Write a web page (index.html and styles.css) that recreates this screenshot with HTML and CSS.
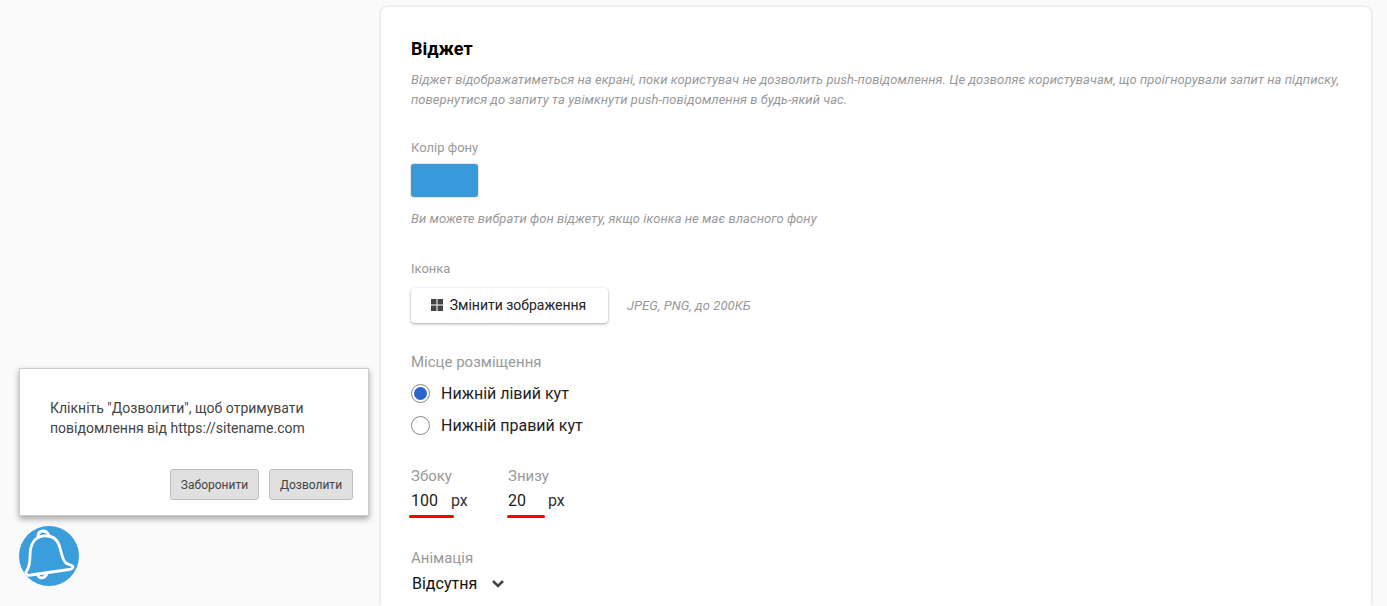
FILE: index.html
```html
<!DOCTYPE html>
<html lang="uk">
<head>
  <meta charset="UTF-8">
  <title>Віджет</title>
  <link rel="stylesheet" href="styles.css">
</head>
<body>

<div class="preview">
  <div class="popup">
    <p class="popup-text">Клікніть "Дозволити", щоб отримувати повідомлення від https://sitename.com</p>
    <div class="popup-actions">
      <button class="popup-btn btn-deny">Заборонити</button>
      <button class="popup-btn btn-allow">Дозволити</button>
    </div>
  </div>
  <div class="bell">
    <svg width="60" height="60" viewBox="0 0 60 60" fill="none" stroke="#fff" stroke-width="2.8" stroke-linecap="round" stroke-linejoin="round">
      <path d="M7 46 C10 42 11 38 11 30 C11 18 16 11 24 10 C33 9 39 13 41 22 C43 30 44 35 47 37 C50 39 54 39 54 41 C54 43 52 43 50 43.500 L12 49 C8 50 6 48 7 46 Z"/>
      <path d="M19 11 C19 6 22 5 24 5 C27 5 29 7 30 10"/>
      <path d="M19 49 C20 53 26 53 28 47.500"/>
    </svg>
  </div>
</div>

<div class="card">
  <h2 class="title">Віджет</h2>
  <p class="hint hint-top">Віджет відображатиметься на екрані, поки користувач не дозволить push-повідомлення. Це дозволяє користувачам, що проігнорували запит на підписку, повернутися до запиту та увімкнути push-повідомлення в будь-який час.</p>

  <div class="label label-color">Колір фону</div>
  <div class="swatch"></div>
  <p class="hint hint-color">Ви можете вибрати фон віджету, якщо іконка не має власного фону</p>

  <div class="label label-icon">Іконка</div>
  <div class="upload-row">
    <button class="upload-btn">
      <svg width="12" height="12" viewBox="0 0 12 12" fill="#444">
        <rect width="5.500" height="5.500"/>
        <rect x="6.500" width="5.500" height="5.500"/>
        <rect y="6.500" width="5.500" height="5.500"/>
        <rect x="6.500" y="6.500" width="5.500" height="5.500"/>
      </svg>
      <span class="upload-text">Змінити зображення</span>
    </button>
    <span class="hint">JPEG, PNG, до 200КБ</span>
  </div>

  <div class="label label-big label-place">Місце розміщення</div>
  <div class="radio-row">
    <span class="radio radio-on"></span>
    <span>Нижній лівий кут</span>
  </div>
  <div class="radio-row">
    <span class="radio"></span>
    <span>Нижній правий кут</span>
  </div>

  <div class="offsets">
    <div class="offset offset-side">
      <div class="label label-big">Збоку</div>
      <div class="offset-value"><span class="num">100</span><span>px</span></div>
      <div class="red-line"></div>
    </div>
    <div class="offset offset-bottom">
      <div class="label label-big">Знизу</div>
      <div class="offset-value"><span class="num">20</span><span>px</span></div>
      <div class="red-line"></div>
    </div>
  </div>

  <div class="label label-big label-anim">Анімація</div>
  <div class="select">
    Відсутня
    <svg width="12" height="8" viewBox="0 0 12 8" fill="none" stroke="#444" stroke-width="2.500">
      <path d="M1 1 L6 6 L11 1"/>
    </svg>
  </div>
</div>

</body>
</html>
```

FILE: styles.css
```css
html, body {
  height: 606px;
  overflow: hidden;
}

body {
  margin: 0;
  background: #fafafa;
  font-family: Roboto, sans-serif;
  display: flex;
  align-items: flex-start;
}

.preview {
  width: 381px;
  height: 606px;
  box-sizing: border-box;
  padding: 0 0 20px 19px;
  display: flex;
  flex-direction: column;
  justify-content: flex-end;
  flex-shrink: 0;
}

.popup {
  width: 350px;
  height: 148px;
  box-sizing: border-box;
  padding: 29px 15px 0 30px;
  background: #fff;
  border: 1px solid #ccc;
  box-shadow: 0 3px 6px rgba(0,0,0,0.35);
  margin-bottom: 10px;
  display: flex;
  flex-direction: column;
  justify-content: space-between;
}

.popup-text {
  margin: 0;
  font-size: 14px;
  line-height: 20px;
  color: #444;
  width: 270px;
}

.popup-actions {
  display: flex;
  justify-content: flex-end;
  gap: 10px;
  margin-bottom: 15px;
}

.popup-btn {
  height: 31px;
  padding: 0;
  background: #e0e0e0;
  border: 1px solid #bdbdbd;
  border-radius: 3px;
  font-family: Roboto, sans-serif;
  font-size: 12px;
  color: #444;
}

.btn-deny {
  width: 89px;
}

.btn-allow {
  width: 84px;
}

.bell {
  width: 60px;
  height: 60px;
  border-radius: 50%;
  background: #3a9ddc;
  overflow: hidden;
}

.bell svg {
  display: block;
}

.card {
  width: 990px;
  height: 599px;
  box-sizing: border-box;
  margin-top: 7px;
  padding: 32px 30px 0;
  background: #fff;
  border-radius: 6px 6px 0 0;
  box-shadow: 0 0 3px rgba(0,0,0,0.2);
  flex-shrink: 0;
}

.title {
  margin: 0;
  font-size: 18px;
  line-height: 20px;
  font-weight: 700;
  color: #000;
}

.hint {
  margin: 0;
  font-size: 13px;
  line-height: 20px;
  font-style: italic;
  letter-spacing: 0.05px;
  color: #999;
}

.hint-top {
  margin-top: 11px;
}

.label {
  font-size: 13px;
  line-height: 16px;
  color: #999;
}

.label-big {
  font-size: 15px;
  line-height: 18px;
}

.label-color {
  margin-top: 30px;
}

.swatch {
  width: 67px;
  height: 33px;
  margin-top: 8px;
  background: #3a9ad9;
  border-radius: 3px;
  box-shadow: 0 0 2px rgba(0,0,0,0.4);
}

.hint-color {
  margin-top: 12px;
}

.label-icon {
  margin-top: 32px;
}

.upload-row {
  display: flex;
  align-items: center;
  gap: 19px;
  margin-top: 11px;
}

.upload-btn {
  width: 197px;
  height: 35px;
  display: flex;
  align-items: center;
  justify-content: center;
  gap: 7px;
  padding: 0 2px 2px 0;
  background: #fff;
  border: none;
  border-radius: 4px;
  box-shadow: 0 1px 3px rgba(0,0,0,0.35);
  font-family: Roboto, sans-serif;
  font-size: 14px;
  color: #222;
}

.label-place {
  margin-top: 30px;
}

.radio-row {
  display: flex;
  align-items: center;
  gap: 11px;
  height: 32px;
  font-size: 16px;
  color: #222;
}

.label-place + .radio-row {
  margin-top: 6px;
}

.radio {
  width: 17px;
  height: 17px;
  border: 1px solid #888;
  border-radius: 50%;
  background: #fff;
  position: relative;
}

.radio-on::after {
  content: "";
  position: absolute;
  top: 2px;
  left: 2px;
  width: 13px;
  height: 13px;
  border-radius: 50%;
  background: #2b66cc;
}

.offsets {
  display: flex;
  margin-top: 26px;
}

.offset-side {
  width: 97px;
}

.offset-value {
  display: flex;
  margin-top: 7px;
  font-size: 16px;
  line-height: 18px;
  color: #333;
}

.num {
  width: 40px;
  color: #222;
}

.red-line {
  height: 3px;
  margin: 5px 0 0 -2px;
  background: #f00;
  border-radius: 2px;
}

.offset-side .red-line {
  width: 45px;
}

.offset-bottom .red-line {
  width: 38px;
  margin-left: -1px;
}

.label-anim {
  margin-top: 31px;
}

.select {
  display: flex;
  align-items: center;
  gap: 15px;
  margin: 8px 0 0 1px;
  font-size: 16px;
  line-height: 18px;
  color: #111;
}
```
